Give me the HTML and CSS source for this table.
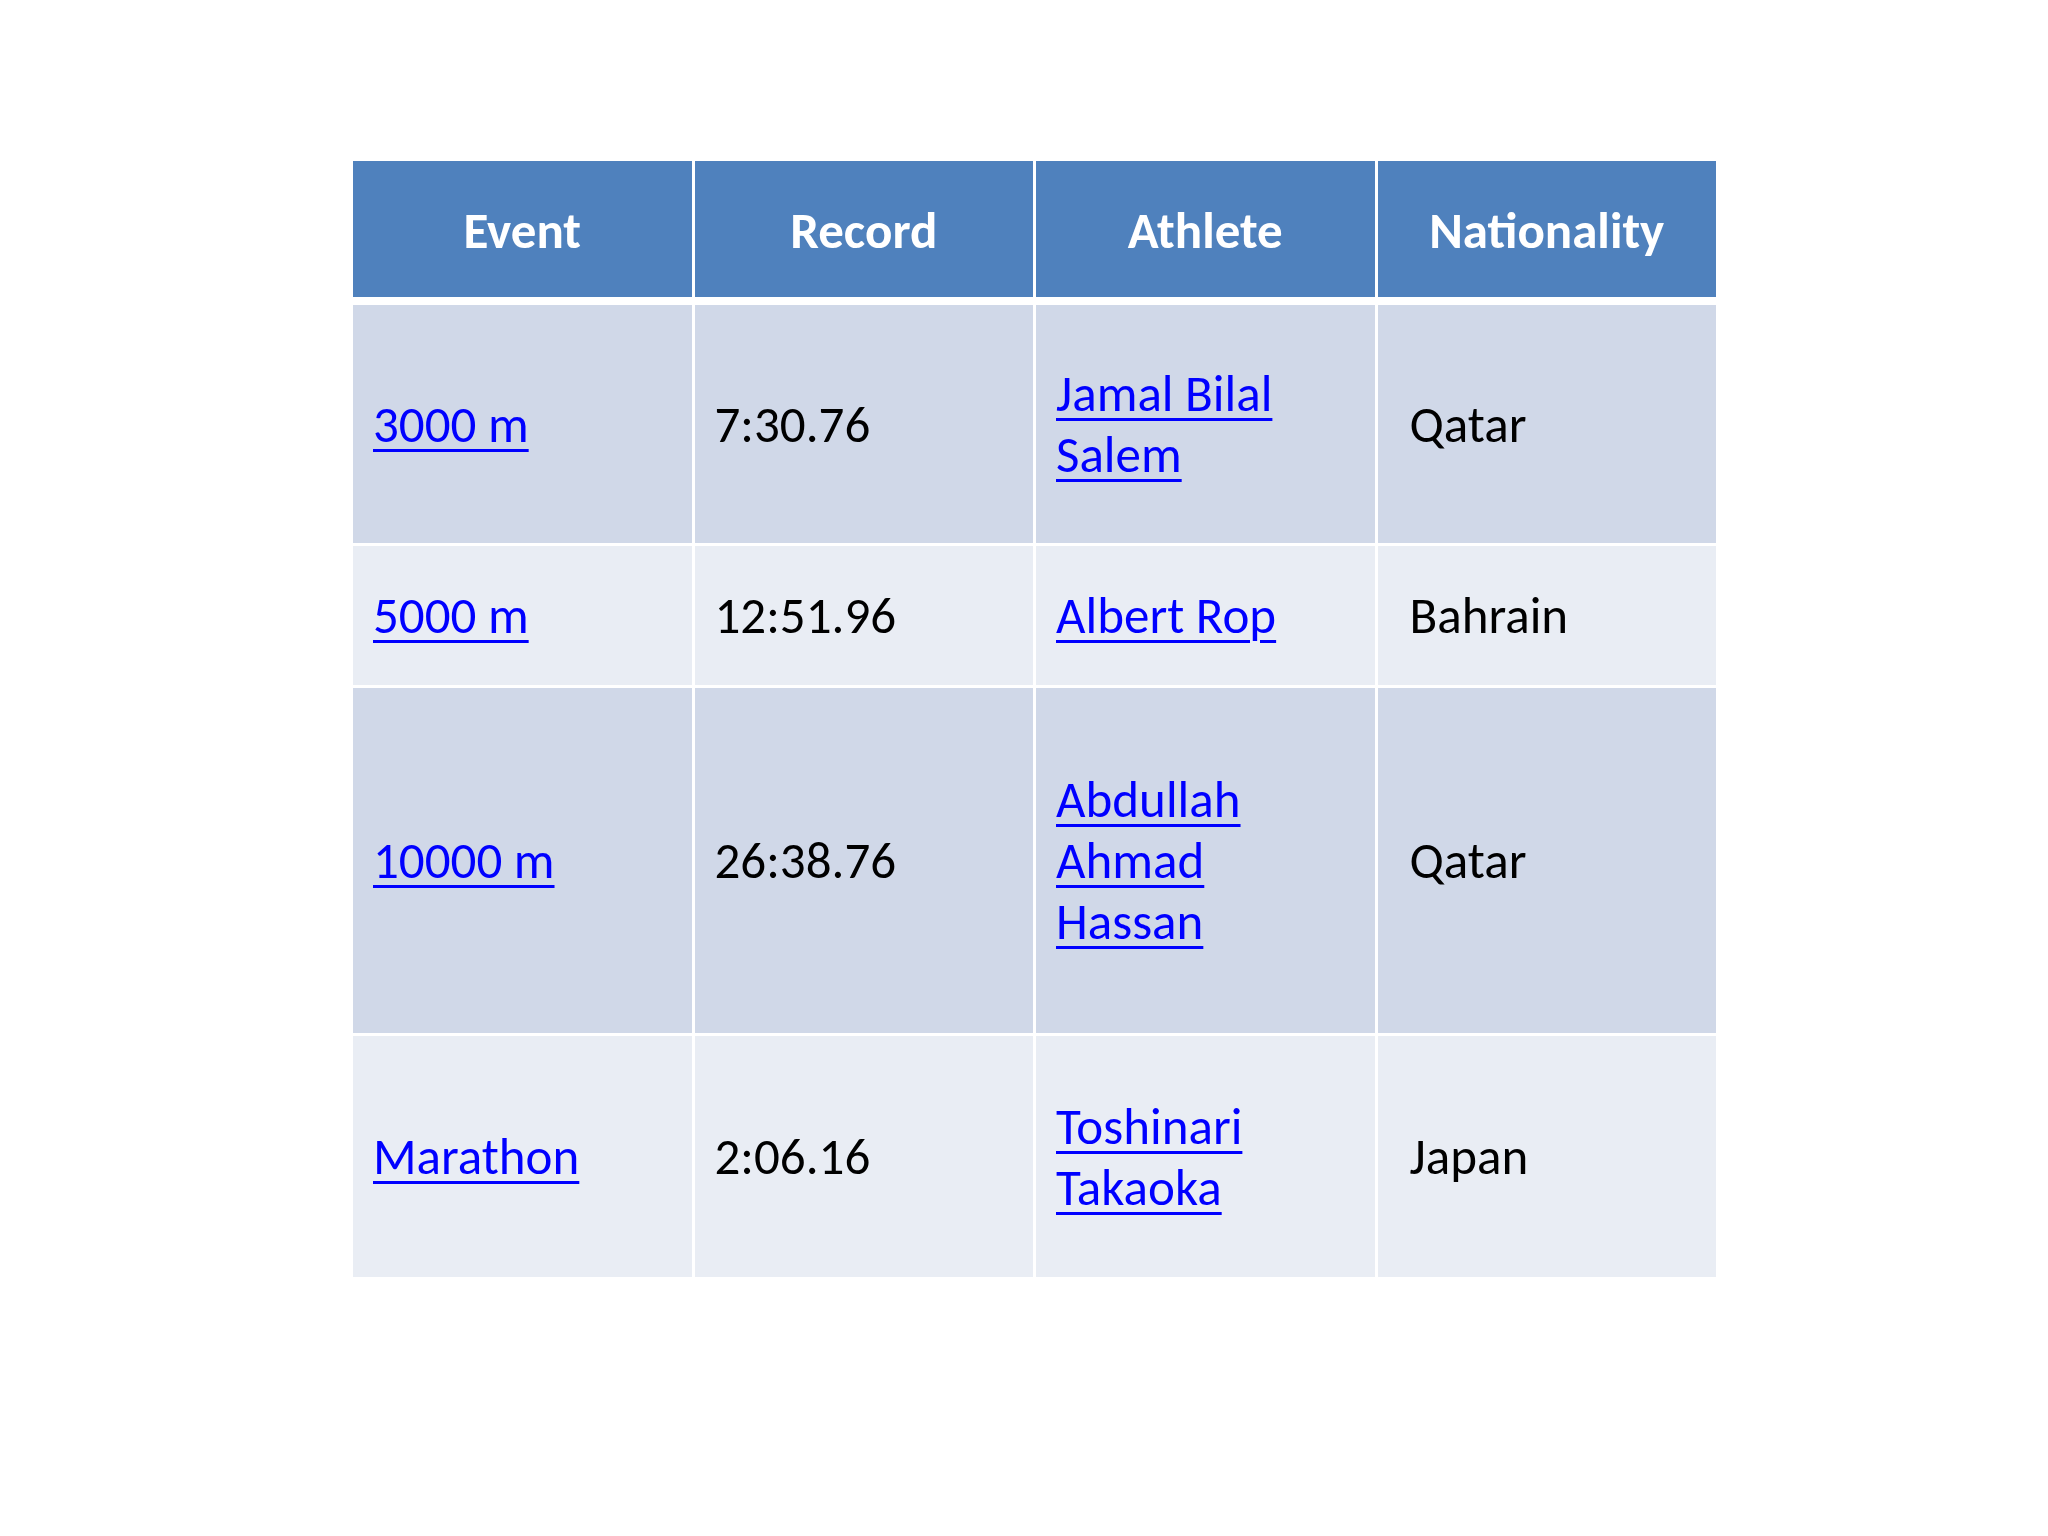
FILE: index.html
```html
<!DOCTYPE html>
<html lang="en">
<head>
<meta charset="utf-8">
<title>Records</title>
<link rel="stylesheet" href="styles.css">
</head>
<body>
<main class="slide">
  <div class="records" role="table">
    <div class="cell head" role="columnheader">Event</div>
    <div class="cell head" role="columnheader">Record</div>
    <div class="cell head" role="columnheader">Athlete</div>
    <div class="cell head" role="columnheader">Nationality</div>

    <div class="cell odd" role="cell"><a href="#">3000 m</a></div>
    <div class="cell odd" role="cell">7:30.76</div>
    <div class="cell odd name" role="cell"><a href="#">Jamal Bilal Salem</a></div>
    <div class="cell odd last" role="cell">Qatar</div>

    <div class="cell even" role="cell"><a href="#">5000 m</a></div>
    <div class="cell even" role="cell">12:51.96</div>
    <div class="cell even name" role="cell"><a href="#">Albert Rop</a></div>
    <div class="cell even last" role="cell">Bahrain</div>

    <div class="cell odd" role="cell"><a href="#">10000 m</a></div>
    <div class="cell odd" role="cell">26:38.76</div>
    <div class="cell odd name" role="cell"><a href="#">Abdullah Ahmad Hassan</a></div>
    <div class="cell odd last" role="cell">Qatar</div>

    <div class="cell even" role="cell"><a href="#">Marathon</a></div>
    <div class="cell even" role="cell">2:06.16</div>
    <div class="cell even name" role="cell"><a href="#">Toshinari Takaoka</a></div>
    <div class="cell even last" role="cell">Japan</div>
  </div>
</main>
</body>
</html>
```

FILE: styles.css
```css
html, body {
  margin: 0;
  padding: 0;
  background: #ffffff;
}

body {
  width: 2048px;
  height: 1536px;
  overflow: hidden;
  font-family: Calibri, Carlito, Lato, "Noto Sans", sans-serif;
}

.slide {
  padding: 161px 0 0 353px;
}

.records {
  width: 1363px;
  display: grid;
  grid-template-columns: repeat(4, 1fr);
  grid-template-rows: 141px 238px 139px 345px 241px;
  column-gap: 3px;
  row-gap: 3px;
  background: #ffffff;
}

.cell {
  display: flex;
  align-items: center;
  padding: 0 20px;
  font-size: 51px;
  line-height: 61px;
  color: #000000;
  min-width: 0;
}

.head {
  justify-content: center;
  background: #4f81bd;
  color: #ffffff;
  font-weight: 700;
  margin-bottom: 5px;
  padding: 2px 0 0;
}

.odd {
  background: #d0d8e8;
}

.even {
  background: #e9edf4;
}

.name {
  padding-right: 48px;
}

.last {
  padding-left: 32px;
}

.cell a {
  color: #0000ff;
  text-decoration: underline;
  text-decoration-thickness: 3px;
  text-underline-offset: 7px;
}
```
